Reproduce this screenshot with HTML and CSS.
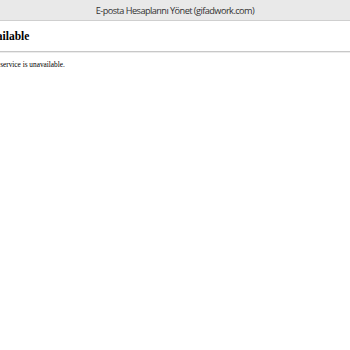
FILE: index.html
```html
<!DOCTYPE html>
<html>
<head>
<meta charset="utf-8">
<link rel="stylesheet" href="styles.css">
</head>
<body>
<div class="titlebar">E-posta Hesaplarını Yönet (gifadwork.com)</div>
<div class="content">
  <h2 class="heading">Service Unavailable</h2>
  <hr class="rule">
  <p class="message">The service is unavailable.</p>
</div>
</body>
</html>
```
FILE: styles.css
```css
html, body {
  margin: 0;
  padding: 0;
  background: #ffffff;
  overflow: hidden;
}
.titlebar {
  height: 20px;
  line-height: 21px;
  background: #e9e9e9;
  border-bottom: 1px solid #cfcfcf;
  text-align: center;
  font-family: "Open Sans", sans-serif;
  font-size: 9.2px;
  color: #333333;
  letter-spacing: -0.55px;
}
.content {
  font-family: "Liberation Serif", "Times New Roman", serif;
  color: #000000;
}
.heading {
  margin: 0 0 0 -68px;
  padding-top: 9px;
  font-family: "Liberation Serif", "Times New Roman", serif;
  font-size: 11.5px;
  font-weight: bold;
  line-height: 13px;
  white-space: nowrap;
}
.rule {
  margin: 8px 0 0 0;
  height: 0;
  border: 0;
  border-top: 1px solid #c8c8c8;
  border-bottom: 1px solid #ececec;
}
.message {
  margin: 7px 0 0 -13px;
  font-family: "Liberation Serif", "Times New Roman", serif;
  font-size: 7.3px;
  line-height: 9px;
  white-space: nowrap;
}
```
